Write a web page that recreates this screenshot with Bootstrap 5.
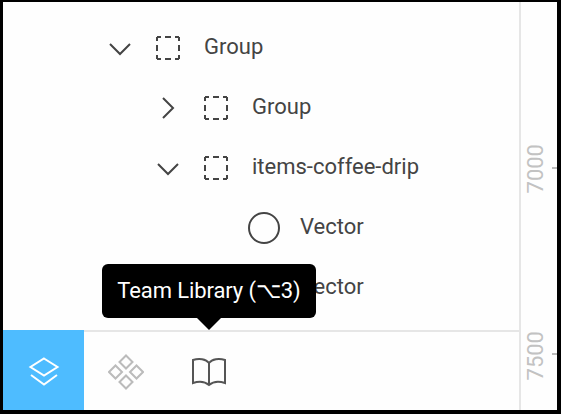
<!DOCTYPE html>
<html lang="en">

<head>
    <meta charset="UTF-8">
    <meta name="viewport" content="width=device-width, initial-scale=1.0">
    <title>Layers panel</title>
    <link href="https://cdn.jsdelivr.net/npm/bootstrap@5.3.0/dist/css/bootstrap.min.css" rel="stylesheet">
    <style>
        html,
        body {
            height: 100%;
            margin: 0;
            background: #000;
            overflow: hidden;
        }

        .frame {
            width: 561px;
            height: 414px;
            border: solid #000;
            border-width: 2px 4px 4px 3px;
            background: #fefefe;
            font-family: Roboto, "Liberation Sans", sans-serif;
            color: #444;
        }

        .layers-list {
            padding-top: 16px;
            overflow: hidden;
        }

        .layer-row {
            height: 60px;
            font-size: 22px;
        }

        .depth-0 { padding-left: 93px; }
        .depth-1 { padding-left: 141px; }
        .depth-2 { padding-left: 189px; }

        .twirl,
        .kind {
            width: 48px;
        }

        .twirl-down {
            padding-top: 1px;
        }

        .layer-name {
            margin-left: 12px;
            margin-top: -4px;
        }

        .bottom-tabs {
            height: 80px;
            border-top: 2px solid #e6e6e6;
        }

        .tab-item {
            width: 83px;
            margin-top: -2px;
            padding-top: 4px;
        }

        .tab-item:first-child {
            width: 81px;
        }

        .tab-on {
            background: #4ebcff;
        }

        .tip {
            position: absolute;
            left: 99px;
            top: 262px;
            width: 214px;
            height: 54px;
            padding-bottom: 2px;
            background: #000;
            color: #fff;
            border-radius: 6px;
            font-size: 22px;
            letter-spacing: -.1px;
        }

        .tip::after {
            content: "";
            position: absolute;
            left: 95px;
            top: 100%;
            border: 12px solid transparent;
            border-bottom-width: 0;
            border-top-color: #000;
        }

        .ruler {
            width: 38px;
            border-left: 2px solid #e6e6e6;
        }

        .ruler-mark {
            position: absolute;
            right: 0;
            width: 5px;
            height: 2px;
            background: #bbb;
        }

        .ruler-label {
            position: absolute;
            left: 6px;
            writing-mode: vertical-rl;
            transform: rotate(180deg);
            font-size: 22px;
            line-height: 18px;
            color: #c2c2c2;
        }
    </style>
</head>

<body>
    <div class="frame d-flex position-relative">
        <div class="d-flex flex-column flex-grow-1">
            <div class="layers-list flex-grow-1">
                <div class="layer-row depth-0 d-flex align-items-center">
                    <div class="twirl twirl-down d-flex justify-content-center">
                        <svg width="24" height="14" viewBox="0 0 24 14"><path d="M2 2l10 10L22 2" fill="none" stroke="#444" stroke-width="2"/></svg>
                    </div>
                    <div class="kind d-flex justify-content-center">
                        <svg width="24" height="24" viewBox="0 0 24 24"><rect x="1" y="1" width="22" height="22" fill="none" stroke="#444" stroke-width="2" stroke-dasharray="4 4 6 4 4 0"/></svg>
                    </div>
                    <span class="layer-name">Group</span>
                </div>
                <div class="layer-row depth-1 d-flex align-items-center">
                    <div class="twirl d-flex justify-content-center">
                        <svg width="14" height="24" viewBox="0 0 14 24"><path d="M2 2l10 10L2 22" fill="none" stroke="#444" stroke-width="2"/></svg>
                    </div>
                    <div class="kind d-flex justify-content-center">
                        <svg width="24" height="24" viewBox="0 0 24 24"><rect x="1" y="1" width="22" height="22" fill="none" stroke="#444" stroke-width="2" stroke-dasharray="4 4 6 4 4 0"/></svg>
                    </div>
                    <span class="layer-name">Group</span>
                </div>
                <div class="layer-row depth-1 d-flex align-items-center">
                    <div class="twirl twirl-down d-flex justify-content-center">
                        <svg width="24" height="14" viewBox="0 0 24 14"><path d="M2 2l10 10L22 2" fill="none" stroke="#444" stroke-width="2"/></svg>
                    </div>
                    <div class="kind d-flex justify-content-center">
                        <svg width="24" height="24" viewBox="0 0 24 24"><rect x="1" y="1" width="22" height="22" fill="none" stroke="#444" stroke-width="2" stroke-dasharray="4 4 6 4 4 0"/></svg>
                    </div>
                    <span class="layer-name">items-coffee-drip</span>
                </div>
                <div class="layer-row depth-2 d-flex align-items-center">
                    <div class="twirl"></div>
                    <div class="kind d-flex justify-content-center">
                        <svg width="32" height="32" viewBox="0 0 32 32"><circle cx="16" cy="16" r="15" fill="none" stroke="#444" stroke-width="2"/></svg>
                    </div>
                    <span class="layer-name">Vector</span>
                </div>
                <div class="layer-row depth-2 d-flex align-items-center">
                    <div class="twirl"></div>
                    <div class="kind"></div>
                    <span class="layer-name">Vector</span>
                </div>
            </div>
            <div class="bottom-tabs d-flex">
                <div class="tab-item tab-on d-flex align-items-center justify-content-center">
                    <svg width="32" height="30" viewBox="0 0 32 30"><path d="M16 1.500L29.500 10 16 18.500 2.500 10z M3 18L16 27.500 29 18" fill="none" stroke="#fff" stroke-width="2"/></svg>
                </div>
                <div class="tab-item d-flex align-items-center justify-content-center">
                    <svg width="36" height="36" viewBox="0 0 36 36"><path d="M18 1.500L24.500 8 18 14.500 11.500 8z M7.500 11.500L14 18 7.500 24.500 1 18z M28.500 11.500L35 18 28.500 24.500 22 18z M18 21.500L24.500 28 18 34.500 11.500 28z" fill="none" stroke="#bbb" stroke-width="2"/></svg>
                </div>
                <div class="tab-item d-flex align-items-center justify-content-center">
                    <svg width="36" height="30" viewBox="0 0 36 30"><path d="M18 6C15 2 8 1 2 3V26C8 24 14 24.500 18 28 22 24.500 28 24 34 26V3C28 1 21 2 18 6ZM18 6V27" fill="none" stroke="#555" stroke-width="2"/></svg>
                </div>
            </div>
        </div>
        <div class="ruler position-relative flex-shrink-0">
            <span class="ruler-label" style="top: 142px">7000</span>
            <div class="ruler-mark" style="top: 165px"></div>
            <span class="ruler-label" style="top: 329px">7500</span>
            <div class="ruler-mark" style="top: 351px"></div>
        </div>
        <div class="tip d-flex align-items-center justify-content-center">Team Library (⌥3)</div>
    </div>

    <script src="https://cdn.jsdelivr.net/npm/bootstrap@5.3.0/dist/js/bootstrap.bundle.min.js"></script>
</body>

</html>
